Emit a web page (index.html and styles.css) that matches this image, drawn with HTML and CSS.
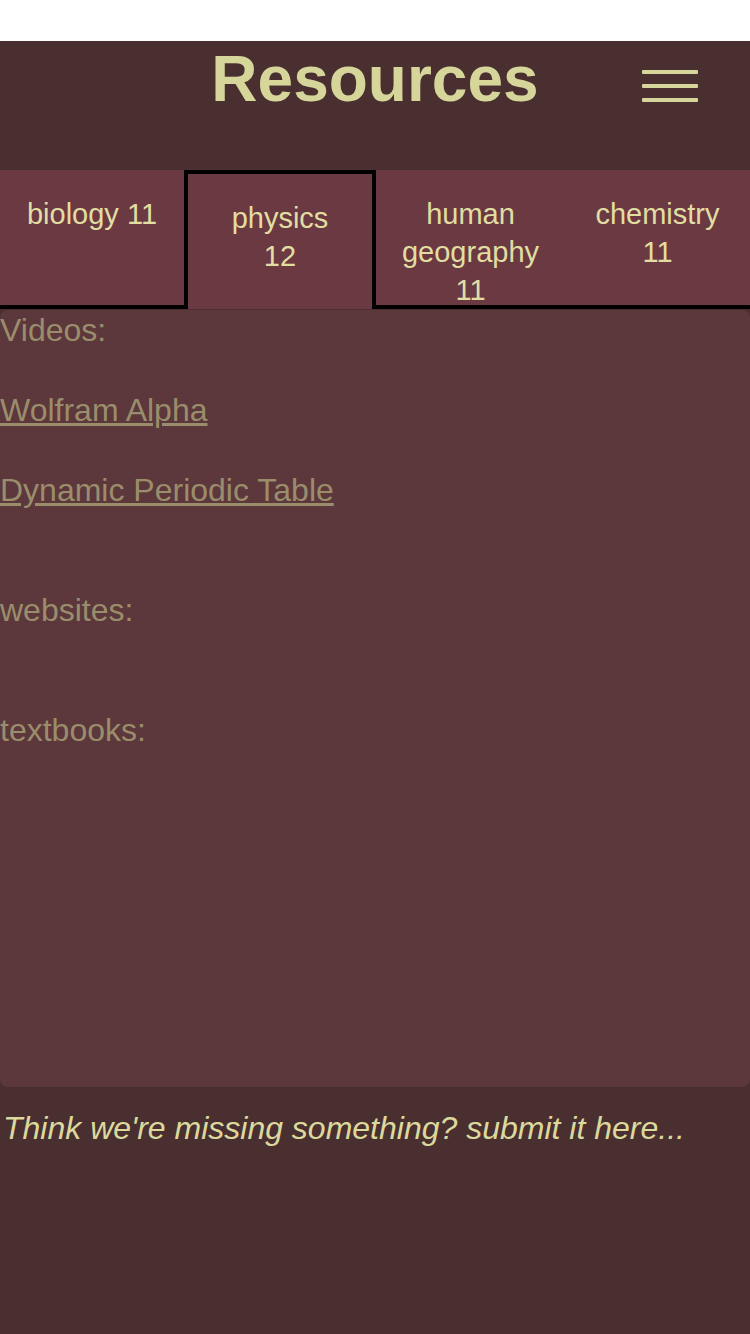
FILE: index.html
```html
<!DOCTYPE html>
<html>
<head>
<meta charset="utf-8">
<link rel="stylesheet" href="styles.css">
</head>
<body>
<div class="page">
  <header class="header">
    <div class="spacer"></div>
    <h1 class="title">Resources</h1>
    <div class="menu">
      <svg width="56" height="32" viewBox="0 0 56 32">
        <rect x="0" y="0" width="56" height="4" rx="1" fill="#d6d59a"/>
        <rect x="0" y="14" width="56" height="4" rx="1" fill="#d6d59a"/>
        <rect x="0" y="28" width="56" height="4" rx="1" fill="#d6d59a"/>
      </svg>
    </div>
  </header>
  <nav class="tabs">
    <div class="tab">biology 11</div>
    <div class="tab active">physics<br>12</div>
    <div class="tab">human<br>geography<br>11</div>
    <div class="tab">chemistry<br>11</div>
  </nav>
  <main class="content">
    <p class="label">Videos:</p>
    <p class="item"><a href="#">Wolfram Alpha</a></p>
    <p class="item"><a href="#">Dynamic Periodic Table</a></p>
    <p class="label section">websites:</p>
    <p class="label section">textbooks:</p>
  </main>
  <p class="footer">Think we're missing something? submit it here...</p>
</div>
</body>
</html>
```
FILE: styles.css
```css
html, body {
  margin: 0;
  padding: 0;
  background: #ffffff;
}
body {
  font-family: "Liberation Sans", Arial, Helvetica, sans-serif;
}
.page {
  margin-top: 41px;
  background: #4a2f31;
  min-height: 1293px;
}
.header {
  display: grid;
  grid-template-columns: 1fr auto 1fr;
  height: 129px;
}
.title {
  margin: 0;
  font-size: 64px;
  font-weight: bold;
  line-height: 76px;
  color: #d6d59a;
}
.menu {
  justify-self: end;
  margin-right: 52px;
  padding-top: 29px;
}
.menu svg {
  display: block;
}
.tabs {
  display: grid;
  grid-template-columns: 184px 192px 189px 185px;
  grid-template-rows: 139px;
  background: #6b3942;
}
.tab {
  box-sizing: border-box;
  text-align: center;
  font-size: 29px;
  line-height: 38px;
  color: #e2dea2;
  padding-top: 25px;
  border-bottom: 4px solid #000;
}
.tab.active {
  border: 4px solid #000;
  border-bottom: none;
}
.content {
  margin-top: 1px;
  background: #5c373b;
  border-radius: 8px;
  min-height: 777px;
  box-sizing: border-box;
  overflow: hidden;
  color: #9a8d6b;
  font-size: 32px;
  line-height: 40px;
}
.content p {
  margin: 0;
}
.content .item {
  margin-top: 40px;
}
.content .section {
  margin-top: 80px;
}
.content a {
  color: #9a8d6b;
  text-decoration: underline;
}
.footer {
  margin: 21px 0 0 3px;
  font-size: 32px;
  line-height: 40px;
  font-style: italic;
  color: #dcd99c;
}
```
